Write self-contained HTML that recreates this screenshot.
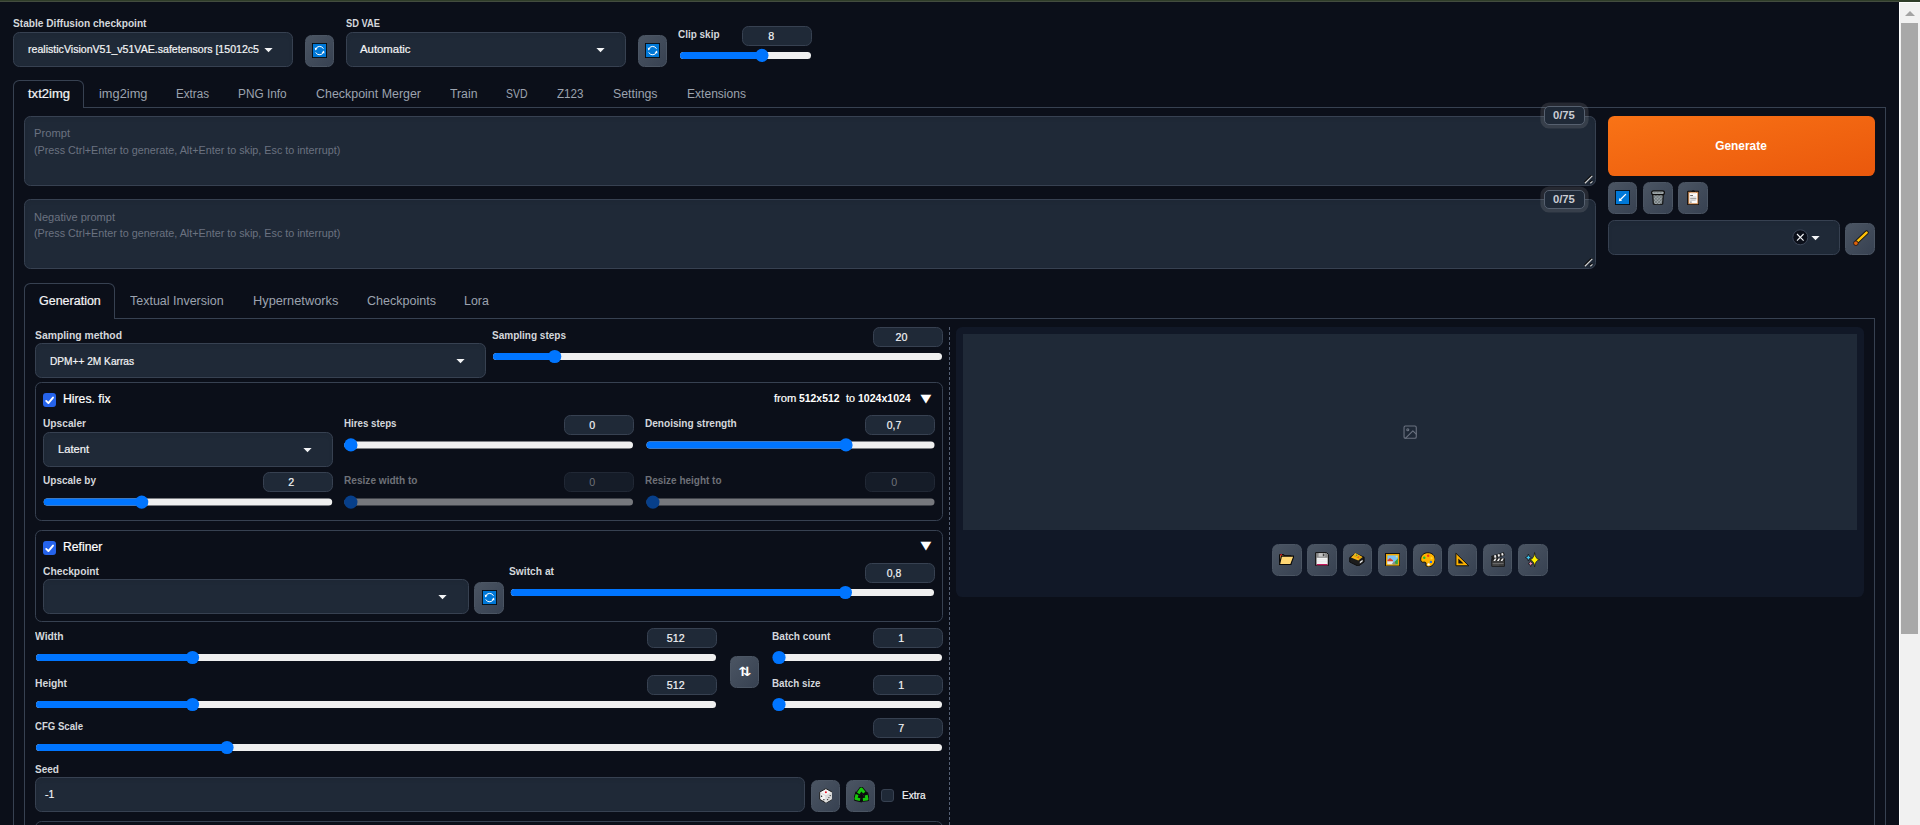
<!DOCTYPE html>
<html lang="en"><head><meta charset="utf-8"><title>Stable Diffusion</title>
<style>
html,body{margin:0;padding:0;background:#0b0f19;overflow:hidden}
#r{position:relative;width:1920px;height:825px;overflow:hidden;background:#0b0f19;font-family:"Liberation Sans",sans-serif}
#r div,#r span,#r svg,#r i,#r b{position:absolute;box-sizing:border-box;display:block}
.t{white-space:pre;line-height:0}
.g{font-family:"DejaVu Sans",sans-serif}
.strip{left:0;top:0;width:1920px;height:2px;background:linear-gradient(#2f3d29 0 1px,#434c3f 1px 2px)}
.strip2{left:1899px;top:0;width:21px;height:2px;background:#2f3d29}
.frame{border:1px solid #374151}
.tab{border:1px solid #374151;border-bottom:none;border-radius:6.4px 6.4px 0 0;background:#0b0f19}
.inp{background:#1f2937;border:1px solid #374151;border-radius:6.4px;box-shadow:inset 0 2px 4px rgba(0,0,0,.05)}
.num{background:#1f2937;border:1px solid #374151;border-radius:6.4px}
.dnum{opacity:.5}
.grp{border:1px solid #374151;border-radius:6.4px}
.btn{background:linear-gradient(to bottom right,#4b5563,#374151);border:1px solid #4b5563;border-radius:6.4px}
.gen{background:linear-gradient(to bottom right,#f97316,#ea580c);border-radius:6.4px}
.tok{background:#1f2937;border:1px solid #56606f;border-radius:5px;box-shadow:0 0 0 3.6px rgba(192,192,192,.15)}
.chk{background:#2563eb;border-radius:3px}
.chk0{background:#1f2937;border:1px solid #374151;border-radius:3px}
.panel{background:#111827;border-radius:6.4px}
.gal{background:#1f2937}
.dash{width:1px;background:repeating-linear-gradient(to bottom,#566175 0 3px,transparent 3px 5px)}
.arr{width:0;height:0;border-left:3.75px solid transparent;border-right:3.75px solid transparent;border-top:4px solid #f3f4f6}
.sl{height:7px;border-radius:4px;background:#efefef}
.sl i{left:0;top:0;height:7px;border-radius:4px;background:#0075ff}
.sl b{top:-3px;width:13px;height:13px;border-radius:50%;background:#0075ff}
.sl.dis{background:#7d7f84}
.sl.dis i{background:#0b4a9b}
.sl.dis b{background:#0b4a9b}
.sbt{left:1899px;top:2px;width:21px;height:823px;background:#f1f1f1;border-left:1px solid #fff;border-top:1px solid #fff}
.sbth{left:1901px;top:23px;width:17px;height:611px;background:#a8a8a8}
.sbar{left:1904.5px;top:11px;width:0;height:0;border-left:5px solid transparent;border-right:5px solid transparent;border-bottom:5px solid #a3a3a3}
</style></head>
<body><div id="r">
<div class="strip"></div><div class="strip2"></div>
<div class="frame" style="left:13px;top:107px;width:1873px;height:800px"></div>
<div class="tab" style="left:13px;top:80px;width:71px;height:28px"></div>
<div class="frame" style="left:24px;top:318px;width:1851px;height:600px"></div>
<div class="tab" style="left:24px;top:283px;width:91px;height:36px"></div>
<div class="inp" style="left:13px;top:32px;width:280px;height:35px;"></div>
<svg style="left:263.8px;top:47.0px" width="9" height="6" viewBox="0 0 9 6"><path d="M0.4 0.9H8.6L4.5 5.2Z" fill="#f3f4f6"/></svg>
<div class="inp" style="left:346px;top:32px;width:280px;height:35px;"></div>
<svg style="left:596.1px;top:47.0px" width="9" height="6" viewBox="0 0 9 6"><path d="M0.4 0.9H8.6L4.5 5.2Z" fill="#f3f4f6"/></svg>
<div class="btn" style="left:305px;top:35px;width:29px;height:32px;"></div>
<div class="btn" style="left:638px;top:35px;width:29px;height:32px;"></div>
<div class="num" style="left:742px;top:26px;width:70px;height:20px;"></div>
<svg style="left:672px;top:47px" width="149" height="17" viewBox="0 0 149 17"><rect x="8.00" y="4.95" width="131.00" height="7" rx="3.5" fill="#efefef"/><rect x="8.00" y="4.95" width="81.90" height="7" rx="3.5" fill="#0075ff"/><circle cx="89.90" cy="8.45" r="6.6" fill="#0075ff"/></svg>
<div class="inp" style="left:24px;top:116px;width:1572px;height:70px;"></div>
<div class="inp" style="left:24px;top:199px;width:1572px;height:70px;"></div>
<div class="tok" style="left:1544px;top:106px;width:41px;height:19px;"></div>
<div class="tok" style="left:1544px;top:190px;width:41px;height:19px;"></div>
<div class="gen" style="left:1608px;top:116px;width:267px;height:60px;"></div>
<div class="btn" style="left:1608px;top:182px;width:29px;height:32px;"></div>
<div class="btn" style="left:1643px;top:182px;width:30px;height:32px;"></div>
<div class="btn" style="left:1678px;top:182px;width:30px;height:32px;"></div>
<div class="inp" style="left:1608px;top:220px;width:232px;height:35px;"></div>
<svg style="left:1810.9px;top:235.0px" width="9" height="6" viewBox="0 0 9 6"><path d="M0.4 0.9H8.6L4.5 5.2Z" fill="#f3f4f6"/></svg>
<div class="btn" style="left:1845px;top:223px;width:30px;height:32px;"></div>
<div class="inp" style="left:35px;top:343px;width:451px;height:35px;"></div>
<svg style="left:456.2px;top:358.0px" width="9" height="6" viewBox="0 0 9 6"><path d="M0.4 0.9H8.6L4.5 5.2Z" fill="#f3f4f6"/></svg>
<div class="num" style="left:873px;top:327px;width:70px;height:20px;"></div>
<svg style="left:485px;top:348px" width="467" height="17" viewBox="0 0 467 17"><rect x="8.00" y="5.00" width="449.00" height="7" rx="3.5" fill="#efefef"/><rect x="8.00" y="5.00" width="61.70" height="7" rx="3.5" fill="#0075ff"/><circle cx="69.70" cy="8.50" r="6.6" fill="#0075ff"/></svg>
<div class="grp" style="left:35px;top:382px;width:908px;height:139px;"></div>
<div class="chk" style="left:43px;top:393px;width:13px;height:13.5px;"></div>
<div class="inp" style="left:43px;top:432px;width:290px;height:35px;"></div>
<svg style="left:303.1px;top:447.0px" width="9" height="6" viewBox="0 0 9 6"><path d="M0.4 0.9H8.6L4.5 5.2Z" fill="#f3f4f6"/></svg>
<div class="num" style="left:564px;top:415px;width:70px;height:20px;"></div>
<svg style="left:336px;top:436px" width="307" height="17" viewBox="0 0 307 17"><rect x="8.30" y="5.40" width="288.70" height="7" rx="3.5" fill="#efefef"/><rect x="8.30" y="5.40" width="6.60" height="7" rx="3.5" fill="#0075ff"/><circle cx="14.90" cy="8.90" r="6.6" fill="#0075ff"/></svg>
<div class="num" style="left:865px;top:415px;width:70px;height:20px;"></div>
<svg style="left:638px;top:436px" width="306" height="17" viewBox="0 0 306 17"><rect x="8.50" y="5.40" width="288.00" height="7" rx="3.5" fill="#efefef"/><rect x="8.50" y="5.40" width="199.50" height="7" rx="3.5" fill="#0075ff"/><circle cx="208.00" cy="8.90" r="6.6" fill="#0075ff"/></svg>
<div class="num" style="left:263px;top:472px;width:70px;height:20px;"></div>
<svg style="left:35px;top:494px" width="307" height="17" viewBox="0 0 307 17"><rect x="8.70" y="4.60" width="288.50" height="7" rx="3.5" fill="#efefef"/><rect x="8.70" y="4.60" width="98.00" height="7" rx="3.5" fill="#0075ff"/><circle cx="106.70" cy="8.10" r="6.6" fill="#0075ff"/></svg>
<div class="num dnum" style="left:564px;top:472px;width:70px;height:20px;"></div>
<svg style="left:336px;top:494px" width="307" height="17" viewBox="0 0 307 17"><rect x="8.30" y="4.60" width="288.70" height="7" rx="3.5" fill="#76787d"/><rect x="8.30" y="4.60" width="6.60" height="7" rx="3.5" fill="#073f8a"/><circle cx="14.90" cy="8.10" r="6.6" fill="#073f8a"/></svg>
<div class="num dnum" style="left:865px;top:472px;width:70px;height:20px;"></div>
<svg style="left:638px;top:494px" width="306" height="17" viewBox="0 0 306 17"><rect x="8.50" y="4.60" width="288.00" height="7" rx="3.5" fill="#76787d"/><rect x="8.50" y="4.60" width="6.40" height="7" rx="3.5" fill="#073f8a"/><circle cx="14.90" cy="8.10" r="6.6" fill="#073f8a"/></svg>
<div class="grp" style="left:35px;top:530px;width:908px;height:92px;"></div>
<div class="chk" style="left:43px;top:541px;width:13px;height:13.5px;"></div>
<div class="inp" style="left:43px;top:579px;width:426px;height:35px;"></div>
<svg style="left:438.1px;top:594.0px" width="9" height="6" viewBox="0 0 9 6"><path d="M0.4 0.9H8.6L4.5 5.2Z" fill="#f3f4f6"/></svg>
<div class="btn" style="left:474px;top:582px;width:30px;height:32px;"></div>
<div class="num" style="left:865px;top:563px;width:70px;height:20px;"></div>
<svg style="left:502px;top:584px" width="442" height="17" viewBox="0 0 442 17"><rect x="8.80" y="5.00" width="423.20" height="7" rx="3.5" fill="#efefef"/><rect x="8.80" y="5.00" width="334.60" height="7" rx="3.5" fill="#0075ff"/><circle cx="343.40" cy="8.50" r="6.6" fill="#0075ff"/></svg>
<div class="num" style="left:647px;top:628px;width:70px;height:20px;"></div>
<svg style="left:28px;top:649px" width="698" height="17" viewBox="0 0 698 17"><rect x="8.00" y="5.00" width="680.00" height="7" rx="3.5" fill="#efefef"/><rect x="8.00" y="5.00" width="156.50" height="7" rx="3.5" fill="#0075ff"/><circle cx="164.50" cy="8.50" r="6.6" fill="#0075ff"/></svg>
<div class="num" style="left:647px;top:675px;width:70px;height:20px;"></div>
<svg style="left:28px;top:696px" width="698" height="17" viewBox="0 0 698 17"><rect x="8.00" y="5.00" width="680.00" height="7" rx="3.5" fill="#efefef"/><rect x="8.00" y="5.00" width="156.50" height="7" rx="3.5" fill="#0075ff"/><circle cx="164.50" cy="8.50" r="6.6" fill="#0075ff"/></svg>
<div class="btn" style="left:730px;top:656px;width:29px;height:32px;"></div>
<div class="num" style="left:873px;top:628px;width:70px;height:20px;"></div>
<svg style="left:765px;top:649px" width="187" height="17" viewBox="0 0 187 17"><rect x="8.30" y="5.00" width="168.70" height="7" rx="3.5" fill="#efefef"/><rect x="8.30" y="5.00" width="5.70" height="7" rx="3.5" fill="#0075ff"/><circle cx="14.00" cy="8.50" r="6.6" fill="#0075ff"/></svg>
<div class="num" style="left:873px;top:675px;width:70px;height:20px;"></div>
<svg style="left:765px;top:696px" width="187" height="17" viewBox="0 0 187 17"><rect x="8.30" y="5.00" width="168.70" height="7" rx="3.5" fill="#efefef"/><rect x="8.30" y="5.00" width="5.70" height="7" rx="3.5" fill="#0075ff"/><circle cx="14.00" cy="8.50" r="6.6" fill="#0075ff"/></svg>
<div class="num" style="left:873px;top:718px;width:70px;height:20px;"></div>
<svg style="left:28px;top:739px" width="924" height="17" viewBox="0 0 924 17"><rect x="8.00" y="5.00" width="906.00" height="7" rx="3.5" fill="#efefef"/><rect x="8.00" y="5.00" width="191.00" height="7" rx="3.5" fill="#0075ff"/><circle cx="199.00" cy="8.50" r="6.6" fill="#0075ff"/></svg>
<div class="inp" style="left:35px;top:777px;width:770px;height:35px;"></div>
<div class="btn" style="left:811px;top:780px;width:29px;height:32px;"></div>
<div class="btn" style="left:846px;top:780px;width:29px;height:32px;"></div>
<div class="chk0" style="left:881px;top:789px;width:13px;height:13px;"></div>
<div class="grp" style="left:35px;top:821px;width:908px;height:79px;"></div>
<div class="dash" style="left:949px;top:327px;height:520px"></div>
<div class="panel" style="left:956px;top:327px;width:908px;height:270px;"></div>
<div class="gal" style="left:963px;top:334px;width:894px;height:196px;"></div>
<div class="btn" style="left:1272px;top:544px;width:30px;height:32px;"></div>
<div class="btn" style="left:1307px;top:544px;width:30px;height:32px;"></div>
<div class="btn" style="left:1343px;top:544px;width:29px;height:32px;"></div>
<div class="btn" style="left:1378px;top:544px;width:29px;height:32px;"></div>
<div class="btn" style="left:1413px;top:544px;width:29px;height:32px;"></div>
<div class="btn" style="left:1448px;top:544px;width:29px;height:32px;"></div>
<div class="btn" style="left:1483px;top:544px;width:29px;height:32px;"></div>
<div class="btn" style="left:1518px;top:544px;width:30px;height:32px;"></div>
<div class="sbt"></div><div class="sbth"></div><div class="sbar"></div>
<svg style="left:312px;top:43px" width="15" height="15" viewBox="0 0 15 15"><rect width="15" height="15" fill="#0a0a0a"/><rect x="0.9" y="0.9" width="13.2" height="13.2" fill="#0078d7"/><g fill="none" stroke="#fff" stroke-width="1"><path d="M3.5 6.5A4.3 4.3 0 0 1 11.5 5.8"/><path d="M11.7 8.7A4.3 4.3 0 0 1 3.7 9.4"/></g><path d="M2.7 4.6L5.5 5.7 3.3 7.6Z" fill="#fff"/><path d="M12.5 10.6L9.7 9.5 11.9 7.6Z" fill="#fff"/></svg>
<svg style="left:645px;top:43px" width="15" height="15" viewBox="0 0 15 15"><rect width="15" height="15" fill="#0a0a0a"/><rect x="0.9" y="0.9" width="13.2" height="13.2" fill="#0078d7"/><g fill="none" stroke="#fff" stroke-width="1"><path d="M3.5 6.5A4.3 4.3 0 0 1 11.5 5.8"/><path d="M11.7 8.7A4.3 4.3 0 0 1 3.7 9.4"/></g><path d="M2.7 4.6L5.5 5.7 3.3 7.6Z" fill="#fff"/><path d="M12.5 10.6L9.7 9.5 11.9 7.6Z" fill="#fff"/></svg>
<svg style="left:481.5px;top:590px" width="15" height="15" viewBox="0 0 15 15"><rect width="15" height="15" fill="#0a0a0a"/><rect x="0.9" y="0.9" width="13.2" height="13.2" fill="#0078d7"/><g fill="none" stroke="#fff" stroke-width="1"><path d="M3.5 6.5A4.3 4.3 0 0 1 11.5 5.8"/><path d="M11.7 8.7A4.3 4.3 0 0 1 3.7 9.4"/></g><path d="M2.7 4.6L5.5 5.7 3.3 7.6Z" fill="#fff"/><path d="M12.5 10.6L9.7 9.5 11.9 7.6Z" fill="#fff"/></svg>
<svg style="left:1615px;top:190px" width="15" height="15" viewBox="0 0 15 15"><rect width="15" height="15" fill="#0a0a0a"/><rect x="0.9" y="0.9" width="13.2" height="13.2" fill="#0078d7"/><path d="M10.9 4.1L5 10" stroke="#fff" stroke-width="1.3" fill="none"/><path d="M3.8 11.2L4.4 8 7.1 10.7Z" fill="#fff"/></svg>
<svg style="left:1651px;top:189.5px" width="14" height="15.6" viewBox="0 0 14 15.6"><defs><pattern id="mesh" width="2.3" height="2.3" patternUnits="userSpaceOnUse" patternTransform="rotate(45)"><rect width="2.3" height="2.3" fill="#9aa2a5"/><path d="M0 0H2.3M0 0V2.3" stroke="#596163" stroke-width="0.95"/></pattern></defs><path d="M1.7 4L2.3 13.9Q7 15.7 11.7 13.9L12.3 4Z" fill="url(#mesh)" stroke="#0c0c0c" stroke-width="1.1" stroke-linejoin="round"/><rect x="0.6" y="0.8" width="12.8" height="3.9" rx="1.9" fill="#a0a8ab" stroke="#0c0c0c" stroke-width="1.2"/><path d="M2.6 2.7H11.4" stroke="#6f7779" stroke-width="0.8" stroke-dasharray="2 1"/></svg>
<svg style="left:1686.8px;top:189.5px" width="12.6" height="15.6" viewBox="0 0 12.6 15.6"><rect x="0.7" y="1.3" width="11.2" height="13.6" rx="0.6" fill="#d08d55" stroke="#0c0c0c" stroke-width="1.1"/><rect x="2.3" y="3" width="8" height="10.2" fill="#fbfbfb"/><path d="M4.6 1.5Q6.3 -0.6 8 1.5Z" fill="#222" stroke="#0c0c0c" stroke-width="0.6"/><path d="M3.6 2.9H9" stroke="#e3c6a8" stroke-width="0.9"/><g stroke-width="0.9"><path d="M3.2 5.5H6" stroke="#555"/><path d="M3.2 7.1H9.4" stroke="#c4c4c4"/><path d="M3.2 8.8H9.4" stroke="#777"/><path d="M3.2 10.5H8.6" stroke="#c9c9c9"/><path d="M3.2 12.1H4.6" stroke="#444"/></g></svg>
<svg style="left:1792.2px;top:229.2px" width="16.6" height="16.6" viewBox="0 0 16.6 16.6"><circle cx="8.3" cy="8.3" r="7.5" fill="#0b0f19" stroke="#3f4a5b" stroke-width="0.9"/><path d="M5 5L11.6 11.6M11.6 5L5 11.6" stroke="#f3f4f6" stroke-width="1.1" fill="none"/></svg>
<svg style="left:1851px;top:228px" width="20" height="20" viewBox="0 0 20 20"><path d="M15.6 4.6L6.2 13.6" stroke="#111" stroke-width="4.2" stroke-linecap="round"/><path d="M15.6 4.6L6.6 13.2" stroke="#ffc107" stroke-width="2.5" stroke-linecap="round"/><circle cx="4.9" cy="15.2" r="2.3" fill="#e0620d" stroke="#111" stroke-width="0.8"/></svg>
<svg style="left:43px;top:393px" width="13.5" height="14" viewBox="0 0 13.5 14"><path d="M3.2 7.9L5.4 10.1 10 4.6" stroke="#fff" stroke-width="1.9" fill="none" stroke-linecap="round" stroke-linejoin="round"/></svg>
<svg style="left:43px;top:541.2px" width="13.5" height="14" viewBox="0 0 13.5 14"><path d="M3.2 7.9L5.4 10.1 10 4.6" stroke="#fff" stroke-width="1.9" fill="none" stroke-linecap="round" stroke-linejoin="round"/></svg>
<svg style="left:818.6px;top:787.5px" width="13.8" height="15.6" viewBox="0 0 13.8 15.6"><path d="M6.9 0.6L13.1 4.1V11.3L6.9 15 0.7 11.3V4.1Z" fill="#f4f4f4" stroke="#111" stroke-width="0.9" stroke-linejoin="round"/><path d="M0.9 4.3L6.9 7.8 12.9 4.3M6.9 7.8V14.6" stroke="#c9c9c9" stroke-width="0.7" fill="none"/><path d="M6.9 7.8L12.9 4.4V11.2L6.9 14.7Z" fill="#dcdcdc"/><circle cx="6.9" cy="4.2" r="1" fill="#e81123"/><circle cx="2.6" cy="8.2" r="0.7" fill="#222"/><circle cx="4.9" cy="11.8" r="0.7" fill="#222"/><circle cx="8.6" cy="11.6" r="0.7" fill="#333"/><circle cx="11.2" cy="7.6" r="0.7" fill="#333"/><circle cx="9.9" cy="9.6" r="0.6" fill="#333"/></svg>
<svg style="left:853.5px;top:787.3px" width="15" height="15.6" viewBox="0 0 15 15.6"><path d="M7.4 5.4L10.6 10.6H4.4Z" fill="#0b0b0b"/><path d="M4.2 6.3L7.3 2 10.3 5.6" fill="none" stroke="#0b0b0b" stroke-width="4.7" stroke-linejoin="round" stroke-linecap="square"/><path d="M12.2 8.1L13 12 8.9 12.4" fill="none" stroke="#0b0b0b" stroke-width="4.7" stroke-linejoin="round" stroke-linecap="square"/><path d="M6.1 12.6L1.9 11.6 3.1 7.5" fill="none" stroke="#0b0b0b" stroke-width="4.7" stroke-linejoin="round" stroke-linecap="square"/><path d="M4.2 6.3L7.3 2 10.3 5.6" fill="none" stroke="#16c60c" stroke-width="3" stroke-linejoin="round"/><path d="M12.2 8.1L13 12 8.9 12.4" fill="none" stroke="#16c60c" stroke-width="3" stroke-linejoin="round"/><path d="M6.1 12.6L1.9 11.6 3.1 7.5" fill="none" stroke="#16c60c" stroke-width="3" stroke-linejoin="round"/></svg>
<svg style="left:1401.7px;top:423.6px" width="16.3" height="16.3" viewBox="0 0 24 24"><g fill="none" stroke="#6b7280" stroke-width="1.6" stroke-linecap="round" stroke-linejoin="round"><rect x="3" y="3" width="18" height="18" rx="2" ry="2"/><circle cx="8.5" cy="8.5" r="1.5"/><polyline points="21 15 16 10 5 21"/></g></svg>
<svg style="left:1279px;top:554px" width="15.4" height="11.2" viewBox="0 0 15.4 11.2"><path d="M0.5 1.2Q0.5 0.6 1.1 0.6H4.4L5.4 1.8H11.8V10.5H0.5Z" fill="#e9a23b" stroke="#0a0a0a" stroke-width="1.15" stroke-linejoin="round"/><circle cx="2.2" cy="0.9" r="0.9" fill="#e81123"/><path d="M2.4 2.1H14.9L11.7 10.6H0.5Z" fill="#ffd774" stroke="#0a0a0a" stroke-width="1.15" stroke-linejoin="round"/></svg>
<svg style="left:1315px;top:552px" width="14.2" height="14.4" viewBox="0 0 14.2 14.4"><path d="M0.6 0.6H11.6L13.6 2.6V13.8H0.6Z" fill="#8a8a8a" stroke="#111" stroke-width="1" stroke-linejoin="round"/><rect x="3.6" y="1.1" width="6.6" height="3.6" fill="#c4c4c4"/><rect x="7.8" y="1.6" width="1.6" height="2.6" fill="#444"/><rect x="1.8" y="5.8" width="10.6" height="6.2" fill="#f4f4f4"/><path d="M1.8 7.8H12.4M1.8 9.8H12.4" stroke="#dcdcdc" stroke-width="0.5"/><rect x="1.8" y="12" width="10.6" height="1.3" fill="#c2185b"/></svg>
<svg style="left:1349.3px;top:551.6px" width="15.8" height="14.8" viewBox="0 0 15.8 14.8"><path d="M0.7 5.6L6.4 1.4 15.1 5.2V10L9.2 14.2 0.7 10Z" fill="#1c1c1c" stroke="#0a0a0a" stroke-width="0.9" stroke-linejoin="round"/><path d="M2 5.4L6.5 0.9 13.6 5 9.3 8.4Z" fill="#f6b617"/><path d="M4.6 3.6L10.6 6.6M6 2.6L11.8 5.6" stroke="#c98a00" stroke-width="0.6"/><circle cx="7.6" cy="3.3" r="0.7" fill="#3fae3a"/><circle cx="9.2" cy="5.2" r="0.7" fill="#e8452c"/><circle cx="6" cy="2" r="0.6" fill="#ffe27a"/><path d="M10.8 9.8L13.6 7.8V9.6L10.8 11.6Z" fill="#e9e9e9"/></svg>
<svg style="left:1384.7px;top:552.6px" width="15.3" height="13.6" viewBox="0 0 15.3 13.6"><rect x="0.5" y="0.5" width="14.3" height="12.6" fill="#f2a900" stroke="#111" stroke-width="1"/><rect x="2.4" y="2.4" width="10.5" height="8.8" fill="#7cc4f5"/><path d="M7.6 11.2L12.9 5.2V11.2Z" fill="#3aa537"/><path d="M2.4 11.2V7.8L5 5.6 7.8 7.8V11.2Z" fill="#e9e9e9"/><path d="M2.4 7.2L5 5 8 7.2V8.2H2.4Z" fill="#d8412f"/><path d="M6.6 11.2L9.4 8.2 10.8 11.2Z" fill="#8c8c8c"/><circle cx="11.6" cy="3.6" r="0.8" fill="#ffe45c"/></svg>
<svg style="left:1419.5px;top:551.5px" width="15.8" height="15.6" viewBox="0 0 15.8 15.6"><path d="M7.9 0.7C12 0.7 15.1 3.6 15.1 7.3 15.1 11.5 12 14.9 8.4 14.9 6.2 14.9 5.6 13.5 6 12 6.3 10.6 5.4 9.9 3.8 10.2 1.8 10.6 0.7 9.2 0.7 7.3 0.7 3.6 3.8 0.7 7.9 0.7Z" fill="#ffb300" stroke="#111" stroke-width="1"/><circle cx="4.3" cy="5.8" r="1.2" fill="#19c12b"/><circle cx="8.2" cy="3.8" r="1.2" fill="#f03a17"/><circle cx="11.6" cy="6.2" r="1.1" fill="#ffd92e"/><circle cx="10.9" cy="9.9" r="1.2" fill="#1f6fe5"/><circle cx="8.6" cy="12.4" r="1.2" fill="#fff"/></svg>
<svg style="left:1455px;top:552.3px" width="14.6" height="14.6" viewBox="0 0 14.6 14.6"><path d="M0.9 1.2L13.8 13.8H0.9Z" fill="#ffb300" stroke="#111" stroke-width="1" stroke-linejoin="round"/><path d="M3.3 6.5L8.6 11.6H3.3Z" fill="#111"/></svg>
<svg style="left:1491px;top:551.6px" width="14.2" height="15.2" viewBox="0 0 14.2 15.2"><path d="M0.5 4.2L12.6 0.6 13.4 3.2 1.3 6.8Z" fill="#2a2a2a" stroke="#111" stroke-width="0.6"/><path d="M3 3.6L4.8 3.1 5.4 5.4 3.6 5.9ZM6.6 2.5L8.4 2 9 4.3 7.2 4.8ZM10.2 1.5L12 1 12.6 3.3 10.8 3.8Z" fill="#f1f1f1"/><rect x="0.7" y="6.4" width="12.8" height="8.2" rx="0.6" fill="#3b3b3b" stroke="#111" stroke-width="0.7"/><rect x="0.9" y="6.6" width="12.4" height="2.3" fill="#222"/><path d="M2.4 8.9L3.8 6.6H5.6L4.2 8.9ZM6 8.9L7.4 6.6H9.2L7.8 8.9ZM9.6 8.9L11 6.6H12.8L11.4 8.9Z" fill="#f1f1f1"/><path d="M1.6 11.6H12.6" stroke="#7a7a7a" stroke-width="0.8"/><path d="M1.6 13H8" stroke="#5c5c5c" stroke-width="0.6"/></svg>
<svg style="left:1524px;top:551px" width="18" height="17" viewBox="0 0 18 17"><path d="M10.6 1.4999999999999991Q11.1 7.9799999999999995 15.6 8.7Q11.1 9.42 10.6 15.899999999999999Q10.1 9.42 5.6 8.7Q10.1 7.9799999999999995 10.6 1.4999999999999991Z" fill="#fff200" stroke="#111" stroke-width="0.7" stroke-linejoin="round"/><path d="M4.4 3.0999999999999996Q4.760000000000001 6.18 7.4 6.6Q4.760000000000001 7.02 4.4 10.1Q4.04 7.02 1.4000000000000004 6.6Q4.04 6.18 4.4 3.0999999999999996Z" fill="#3fc8f4" stroke="#111" stroke-width="0.7" stroke-linejoin="round"/><path d="M6.7 9.6Q7.024 12.24 9.4 12.6Q7.024 12.959999999999999 6.7 15.6Q6.376 12.959999999999999 4.0 12.6Q6.376 12.24 6.7 9.6Z" fill="#f48fb1" stroke="#111" stroke-width="0.7" stroke-linejoin="round"/></svg>
<svg style="left:1584.4px;top:175px" width="10" height="10" viewBox="0 0 10 10"><g fill="none"><path d="M0.9 8.2L8.3 0.9M6.3 8.2L8.5 6.4" stroke="#0a0a0a" stroke-width="1.3" transform="translate(-0.6 -0.9)"/><path d="M0.9 8.2L8.3 0.9M6.3 8.2L8.5 6.4" stroke="#cfcfcf" stroke-width="1.2"/></g></svg>
<svg style="left:1584.4px;top:258px" width="10" height="10" viewBox="0 0 10 10"><g fill="none"><path d="M0.9 8.2L8.3 0.9M6.3 8.2L8.5 6.4" stroke="#0a0a0a" stroke-width="1.3" transform="translate(-0.6 -0.9)"/><path d="M0.9 8.2L8.3 0.9M6.3 8.2L8.5 6.4" stroke="#cfcfcf" stroke-width="1.2"/></g></svg>
<span class="t" style="left:13.10px;top:23px;font-size:10.5px;color:#d4d7dc;transform:scaleX(0.9655);transform-origin:0 50%;font-weight:700">Stable Diffusion checkpoint</span>
<span class="t" style="left:345.60px;top:23px;font-size:10.5px;color:#d4d7dc;transform:scaleX(0.8871);transform-origin:0 50%;font-weight:700">SD VAE</span>
<span class="t" style="left:678.20px;top:34px;font-size:10.5px;color:#d4d7dc;transform:scaleX(0.9482);transform-origin:0 50%;font-weight:700">Clip skip</span>
<span class="t" style="left:27.70px;top:49px;font-size:10.5px;color:#f3f4f6;transform:scaleX(1.0087);transform-origin:0 50%;-webkit-text-stroke:0.2px">realisticVisionV51_v51VAE.safetensors [15012c5</span>
<span class="t" style="left:360.20px;top:49px;font-size:10.5px;color:#f3f4f6;transform:scaleX(1.0817);transform-origin:0 50%;-webkit-text-stroke:0.2px">Automatic</span>
<span class="t" style="left:767.77px;top:36px;font-size:11.6px;color:#f3f4f6;transform:scaleX(0.9220);transform-origin:50% 50%;-webkit-text-stroke:0.2px">8</span>
<span class="t" style="left:28.00px;top:94px;font-size:12px;color:#f3f4f6;transform:scaleX(1.0856);transform-origin:0 50%;-webkit-text-stroke:0.2px">txt2img</span>
<span class="t" style="left:99.00px;top:94px;font-size:12px;color:#9ca3af;transform:scaleX(1.0692);transform-origin:0 50%">img2img</span>
<span class="t" style="left:176.00px;top:94px;font-size:12px;color:#9ca3af;transform:scaleX(0.9701);transform-origin:0 50%">Extras</span>
<span class="t" style="left:238.00px;top:94px;font-size:12px;color:#9ca3af;transform:scaleX(0.9866);transform-origin:0 50%">PNG Info</span>
<span class="t" style="left:315.50px;top:94px;font-size:12px;color:#9ca3af;transform:scaleX(1.0356);transform-origin:0 50%">Checkpoint Merger</span>
<span class="t" style="left:449.50px;top:94px;font-size:12px;color:#9ca3af;transform:scaleX(1.0221);transform-origin:0 50%">Train</span>
<span class="t" style="left:506.00px;top:94px;font-size:12px;color:#9ca3af;transform:scaleX(0.8709);transform-origin:0 50%">SVD</span>
<span class="t" style="left:557.00px;top:94px;font-size:12px;color:#9ca3af;transform:scaleX(0.9686);transform-origin:0 50%">Z123</span>
<span class="t" style="left:613.00px;top:94px;font-size:12px;color:#9ca3af;transform:scaleX(1.0263);transform-origin:0 50%">Settings</span>
<span class="t" style="left:686.50px;top:94px;font-size:12px;color:#9ca3af;transform:scaleX(1.0051);transform-origin:0 50%">Extensions</span>
<span class="t" style="left:34.30px;top:133px;font-size:10.5px;color:#6b7280;transform:scaleX(1.0637);transform-origin:0 50%">Prompt</span>
<span class="t" style="left:34.30px;top:150px;font-size:10.5px;color:#6b7280;transform:scaleX(1.0251);transform-origin:0 50%">(Press Ctrl+Enter to generate, Alt+Enter to skip, Esc to interrupt)</span>
<span class="t" style="left:34.30px;top:217px;font-size:10.5px;color:#6b7280;transform:scaleX(1.0513);transform-origin:0 50%">Negative prompt</span>
<span class="t" style="left:34.30px;top:233px;font-size:10.5px;color:#6b7280;transform:scaleX(1.0251);transform-origin:0 50%">(Press Ctrl+Enter to generate, Alt+Enter to skip, Esc to interrupt)</span>
<span class="t" style="left:1553.41px;top:115px;font-size:11.2px;color:#c9ccd2;transform:scaleX(1.0100);transform-origin:50% 50%;font-weight:700">0/75</span>
<span class="t" style="left:1553.41px;top:199px;font-size:11.2px;color:#c9ccd2;transform:scaleX(1.0100);transform-origin:50% 50%;font-weight:700">0/75</span>
<span class="t" style="left:1715.28px;top:146px;font-size:12px;color:#ffffff;transform:scaleX(0.9898);transform-origin:50% 50%;font-weight:700">Generate</span>
<span class="t" style="left:38.70px;top:301px;font-size:12px;color:#f3f4f6;transform:scaleX(1.0408);transform-origin:0 50%;-webkit-text-stroke:0.2px">Generation</span>
<span class="t" style="left:129.70px;top:301px;font-size:12px;color:#9ca3af;transform:scaleX(1.0395);transform-origin:0 50%">Textual Inversion</span>
<span class="t" style="left:252.50px;top:301px;font-size:12px;color:#9ca3af;transform:scaleX(1.0658);transform-origin:0 50%">Hypernetworks</span>
<span class="t" style="left:366.50px;top:301px;font-size:12px;color:#9ca3af;transform:scaleX(1.0447);transform-origin:0 50%">Checkpoints</span>
<span class="t" style="left:464.20px;top:301px;font-size:12px;color:#9ca3af;transform:scaleX(1.0320);transform-origin:0 50%">Lora</span>
<span class="t" style="left:35.10px;top:335px;font-size:10.5px;color:#d4d7dc;transform:scaleX(0.9876);transform-origin:0 50%;font-weight:700">Sampling method</span>
<span class="t" style="left:50.00px;top:361px;font-size:10.5px;color:#f3f4f6;transform:scaleX(0.9660);transform-origin:0 50%;-webkit-text-stroke:0.2px">DPM++ 2M Karras</span>
<span class="t" style="left:491.60px;top:335px;font-size:10.5px;color:#d4d7dc;transform:scaleX(0.9535);transform-origin:0 50%;font-weight:700">Sampling steps</span>
<span class="t" style="left:895.05px;top:337px;font-size:11.6px;color:#f3f4f6;transform:scaleX(0.9220);transform-origin:50% 50%;-webkit-text-stroke:0.2px">20</span>
<span class="t" style="left:63.20px;top:399px;font-size:12.5px;color:#ffffff;transform:scaleX(0.9769);transform-origin:0 50%;-webkit-text-stroke:0.2px">Hires. fix</span>
<span class="t" style="left:773.50px;top:398px;font-size:10.5px;color:#ffffff;transform:scaleX(1.0660);transform-origin:0 50%;-webkit-text-stroke:0.2px">from </span>
<span class="t" style="left:799.10px;top:398px;font-size:10.5px;color:#ffffff;transform:scaleX(0.9904);transform-origin:0 50%;font-weight:700">512x512</span>
<span class="t" style="left:846.10px;top:398px;font-size:10.5px;color:#ffffff;transform:scaleX(1.0267);transform-origin:0 50%;-webkit-text-stroke:0.2px">to </span>
<span class="t" style="left:858.40px;top:398px;font-size:10.5px;color:#ffffff;transform:scaleX(1.0026);transform-origin:0 50%;font-weight:700">1024x1024</span>
<span class="t" style="left:42.60px;top:423px;font-size:10.5px;color:#d4d7dc;transform:scaleX(0.9694);transform-origin:0 50%;font-weight:700">Upscaler</span>
<span class="t" style="left:57.50px;top:449px;font-size:10.5px;color:#f3f4f6;transform:scaleX(1.0615);transform-origin:0 50%;-webkit-text-stroke:0.2px">Latent</span>
<span class="t" style="left:344.10px;top:423px;font-size:10.5px;color:#d4d7dc;transform:scaleX(0.9272);transform-origin:0 50%;font-weight:700">Hires steps</span>
<span class="t" style="left:589.47px;top:425px;font-size:11.6px;color:#f3f4f6;transform:scaleX(0.9220);transform-origin:50% 50%;-webkit-text-stroke:0.2px">0</span>
<span class="t" style="left:645.10px;top:423px;font-size:10.5px;color:#d4d7dc;transform:scaleX(0.9585);transform-origin:0 50%;font-weight:700">Denoising strength</span>
<span class="t" style="left:885.94px;top:425px;font-size:11.6px;color:#f3f4f6;transform:scaleX(0.8992);transform-origin:50% 50%;-webkit-text-stroke:0.2px">0,7</span>
<span class="t" style="left:42.60px;top:480px;font-size:10.5px;color:#d4d7dc;transform:scaleX(0.9558);transform-origin:0 50%;font-weight:700">Upscale by</span>
<span class="t" style="left:287.97px;top:482px;font-size:11.6px;color:#f3f4f6;transform:scaleX(0.9220);transform-origin:50% 50%;-webkit-text-stroke:0.2px">2</span>
<span class="t" style="left:344.10px;top:480px;font-size:10.5px;color:#6e7178;transform:scaleX(0.9616);transform-origin:0 50%;font-weight:700">Resize width to</span>
<span class="t" style="left:589.47px;top:482px;font-size:11.6px;color:#6e7178;transform:scaleX(0.9220);transform-origin:50% 50%">0</span>
<span class="t" style="left:645.10px;top:480px;font-size:10.5px;color:#6e7178;transform:scaleX(0.9501);transform-origin:0 50%;font-weight:700">Resize height to</span>
<span class="t" style="left:890.77px;top:482px;font-size:11.6px;color:#6e7178;transform:scaleX(0.9220);transform-origin:50% 50%">0</span>
<span class="t" style="left:63.20px;top:547px;font-size:12.5px;color:#ffffff;transform:scaleX(0.9753);transform-origin:0 50%;-webkit-text-stroke:0.2px">Refiner</span>
<span class="t" style="left:42.60px;top:571px;font-size:10.5px;color:#d4d7dc;transform:scaleX(0.9795);transform-origin:0 50%;font-weight:700">Checkpoint</span>
<span class="t" style="left:509.10px;top:571px;font-size:10.5px;color:#d4d7dc;transform:scaleX(0.9763);transform-origin:0 50%;font-weight:700">Switch at</span>
<span class="t" style="left:885.94px;top:573px;font-size:11.6px;color:#f3f4f6;transform:scaleX(0.8992);transform-origin:50% 50%;-webkit-text-stroke:0.2px">0,8</span>
<span class="t" style="left:35.10px;top:636px;font-size:10.5px;color:#d4d7dc;transform:scaleX(0.9806);transform-origin:0 50%;font-weight:700">Width</span>
<span class="t" style="left:665.73px;top:638px;font-size:11.6px;color:#f3f4f6;transform:scaleX(0.9202);transform-origin:50% 50%;-webkit-text-stroke:0.2px">512</span>
<span class="t" style="left:35.10px;top:683px;font-size:10.5px;color:#d4d7dc;transform:scaleX(0.9794);transform-origin:0 50%;font-weight:700">Height</span>
<span class="t" style="left:665.73px;top:685px;font-size:11.6px;color:#f3f4f6;transform:scaleX(0.9202);transform-origin:50% 50%;-webkit-text-stroke:0.2px">512</span>
<span class="t" style="left:772.10px;top:636px;font-size:10.5px;color:#d4d7dc;transform:scaleX(0.9609);transform-origin:0 50%;font-weight:700">Batch count</span>
<span class="t" style="left:898.17px;top:638px;font-size:11.6px;color:#f3f4f6;transform:scaleX(0.9220);transform-origin:50% 50%;-webkit-text-stroke:0.2px">1</span>
<span class="t" style="left:772.10px;top:683px;font-size:10.5px;color:#d4d7dc;transform:scaleX(0.9338);transform-origin:0 50%;font-weight:700">Batch size</span>
<span class="t" style="left:898.17px;top:685px;font-size:11.6px;color:#f3f4f6;transform:scaleX(0.9220);transform-origin:50% 50%;-webkit-text-stroke:0.2px">1</span>
<span class="t" style="left:35.10px;top:726px;font-size:10.5px;color:#d4d7dc;transform:scaleX(0.9137);transform-origin:0 50%;font-weight:700">CFG Scale</span>
<span class="t" style="left:898.17px;top:728px;font-size:11.6px;color:#f3f4f6;transform:scaleX(0.9220);transform-origin:50% 50%;-webkit-text-stroke:0.2px">7</span>
<span class="t" style="left:35.10px;top:769px;font-size:10.5px;color:#d4d7dc;transform:scaleX(0.9558);transform-origin:0 50%;font-weight:700">Seed</span>
<span class="t" style="left:44.80px;top:794px;font-size:11.6px;color:#f3f4f6;transform:scaleX(0.9018);transform-origin:0 50%;-webkit-text-stroke:0.2px">-1</span>
<span class="t" style="left:901.70px;top:795px;font-size:10.5px;color:#f3f4f6;transform:scaleX(0.9586);transform-origin:0 50%;-webkit-text-stroke:0.2px">Extra</span>
<span class="t g" style="left:920.45px;top:397.65px;font-size:14px;font-weight:400;color:#fff;transform:scaleY(0.82);transform-origin:50% 50%">▼</span>
<span class="t g" style="left:920.45px;top:545.15px;font-size:14px;font-weight:400;color:#fff;transform:scaleY(0.82);transform-origin:50% 50%">▼</span>
<span class="t g" style="left:738.4px;top:671.75px;font-size:15.5px;font-weight:700;color:#fff;transform:scaleY(0.82);transform-origin:50% 50%">⇅</span>
</div></body></html>
